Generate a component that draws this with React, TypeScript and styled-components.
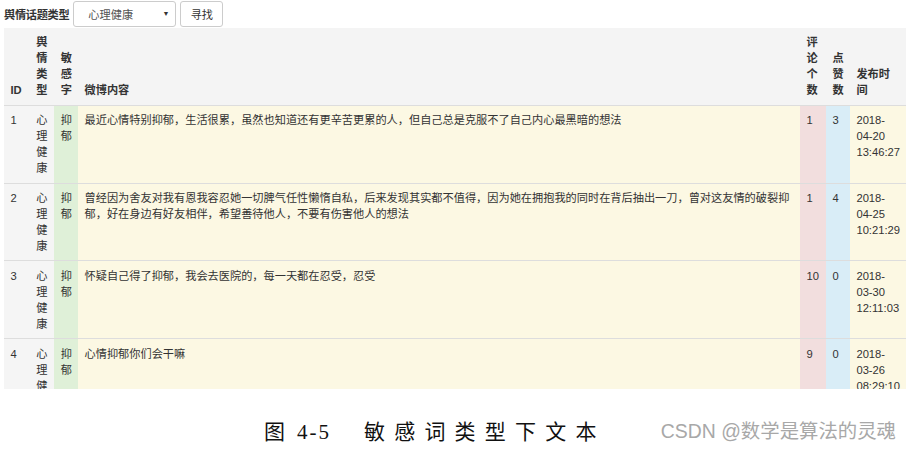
import styled, { createGlobalStyle } from 'styled-components';

const GlobalStyle = createGlobalStyle`
  html, body {
    margin: 0;
    padding: 0;
    background: #fff;
  }
  body {
    font-family: "Liberation Sans", "Noto Sans CJK SC", sans-serif;
    color: #333;
  }
`;

type Tone = 'plain' | 'active' | 'success' | 'warning' | 'danger' | 'info';

const toneColors: Record<Tone, string> = {
  plain: 'transparent',
  active: '#f5f5f5',
  success: '#dff0d8',
  warning: '#fcf8e3',
  danger: '#f2dede',
  info: '#d9edf7',
};

const CELL_PAD = 6.4;

const Page = styled.div`
  width: 910px;
  height: 450px;
  display: flex;
  flex-direction: column;
  overflow: hidden;
`;

const Shot = styled.div`
  height: 389px;
  overflow: hidden;
  padding: 0 4px 0 4px;
`;

const SearchBar = styled.form`
  display: flex;
  align-items: center;
  height: 28px;
  gap: 4px;
`;

const Label = styled.span`
  font-size: 11.2px;
  font-weight: 700;
  color: #333;
  white-space: nowrap;
  letter-spacing: -0.3px;
`;

const SelectBox = styled.div`
  box-sizing: border-box;
  width: 103px;
  height: 26px;
  margin-top: -1px;
  border: 1px solid #ccc;
  border-radius: 3px;
  background: #fff;
  display: flex;
  align-items: center;
  justify-content: space-between;
  padding: 0 6px 0 14px;
  font-size: 11.2px;
  color: #555;
`;

const Caret = styled.span`
  font-size: 7px;
  color: #333;
`;

const FindButton = styled.button`
  box-sizing: border-box;
  width: 43px;
  height: 26px;
  margin-top: -1px;
  border: 1px solid #ccc;
  border-radius: 3px;
  background: #fff;
  font-family: inherit;
  font-size: 11.2px;
  color: #333;
  padding: 0;
`;

const Table = styled.table`
  width: 902px;
  table-layout: fixed;
  border-collapse: collapse;
  font-size: 11.2px;
  line-height: 16px;
`;

const HeadCell = styled.th<{ $w: number }>`
  width: ${(p) => p.$w - CELL_PAD * 2}px;
  background: #f4f4f4;
  text-align: left;
  vertical-align: bottom;
  font-weight: 700;
  padding: ${CELL_PAD}px;
  border-bottom: 1.6px solid #ddd;
  word-break: break-all;
`;

const Row = styled.tr`
  & + & > td {
    border-top: 1.6px solid #ddd;
  }
`;

const Cell = styled.td<{ $tone: Tone }>`
  background: ${(p) => toneColors[p.$tone]};
  vertical-align: top;
  padding: ${CELL_PAD}px;
  height: 64px;
  color: #333;
`;

const Caption = styled.div`
  flex: 1;
  display: flex;
  align-items: center;
  padding-left: 264px;
  padding-top: 20px;
`;

const FigureTitle = styled.span`
  font-family: "Liberation Serif", "Noto Sans CJK SC", serif;
  font-size: 21px;
  color: #111;
  white-space: pre;
`;

const FigureNumber = styled.span`
  letter-spacing: 2px;
  margin: 0 33px 0 12px;
`;

const FigureWords = styled.span`
  letter-spacing: 9.2px;
`;

const Watermark = styled.span`
  margin-left: auto;
  margin-right: 14px;
  font-family: "Liberation Sans", "Noto Sans CJK SC", sans-serif;
  font-size: 19.4px;
  color: #a8a8a8;
`;

const columns = [
  { title: 'ID', w: 26 },
  { title: '舆情类型', w: 24.5 },
  { title: '敏感字', w: 23.7 },
  { title: '微博内容', w: 722 },
  { title: '评论个数', w: 26 },
  { title: '点赞数', w: 24 },
  { title: '发布时间', w: 56 },
];

const posts = [
  {
    id: 1,
    type: '心理健康',
    word: '抑郁',
    text: '最近心情特别抑郁，生活很累，虽然也知道还有更辛苦更累的人，但自己总是克服不了自己内心最黑暗的想法',
    comments: 1,
    likes: 3,
    time: '2018-04-20 13:46:27',
  },
  {
    id: 2,
    type: '心理健康',
    word: '抑郁',
    text: '曾经因为舍友对我有恩我容忍她一切脾气任性懒惰自私，后来发现其实都不值得，因为她在拥抱我的同时在背后抽出一刀，曾对这友情的破裂抑郁，好在身边有好友相伴，希望善待他人，不要有伤害他人的想法',
    comments: 1,
    likes: 4,
    time: '2018-04-25 10:21:29',
  },
  {
    id: 3,
    type: '心理健康',
    word: '抑郁',
    text: '怀疑自己得了抑郁，我会去医院的，每一天都在忍受，忍受',
    comments: 10,
    likes: 0,
    time: '2018-03-30 12:11:03',
  },
  {
    id: 4,
    type: '心理健康',
    word: '抑郁',
    text: '心情抑郁你们会干嘛',
    comments: 9,
    likes: 0,
    time: '2018-03-26 08:29:10',
  },
];

function App() {
  return (
    <Page>
      <GlobalStyle />
      <Shot>
        <SearchBar onSubmit={(e) => e.preventDefault()}>
          <Label>舆情话题类型</Label>
          <SelectBox>
            心理健康
            <Caret>▼</Caret>
          </SelectBox>
          <FindButton type="submit">寻找</FindButton>
        </SearchBar>
        <Table>
          <thead>
            <tr>
              {columns.map((c) => (
                <HeadCell key={c.title} $w={c.w}>
                  {c.title}
                </HeadCell>
              ))}
            </tr>
          </thead>
          <tbody>
            {posts.map((p) => (
              <Row key={p.id}>
                <Cell $tone="active">{p.id}</Cell>
                <Cell $tone="active">{p.type}</Cell>
                <Cell $tone="success">{p.word}</Cell>
                <Cell $tone="warning">{p.text}</Cell>
                <Cell $tone="danger">{p.comments}</Cell>
                <Cell $tone="info">{p.likes}</Cell>
                <Cell $tone="warning">{p.time}</Cell>
              </Row>
            ))}
          </tbody>
        </Table>
      </Shot>
      <Caption>
        <FigureTitle>
          图<FigureNumber>4-5</FigureNumber>
          <FigureWords>敏感词类型下文本</FigureWords>
        </FigureTitle>
        <Watermark>CSDN @数学是算法的灵魂</Watermark>
      </Caption>
    </Page>
  );
}

export default App;
